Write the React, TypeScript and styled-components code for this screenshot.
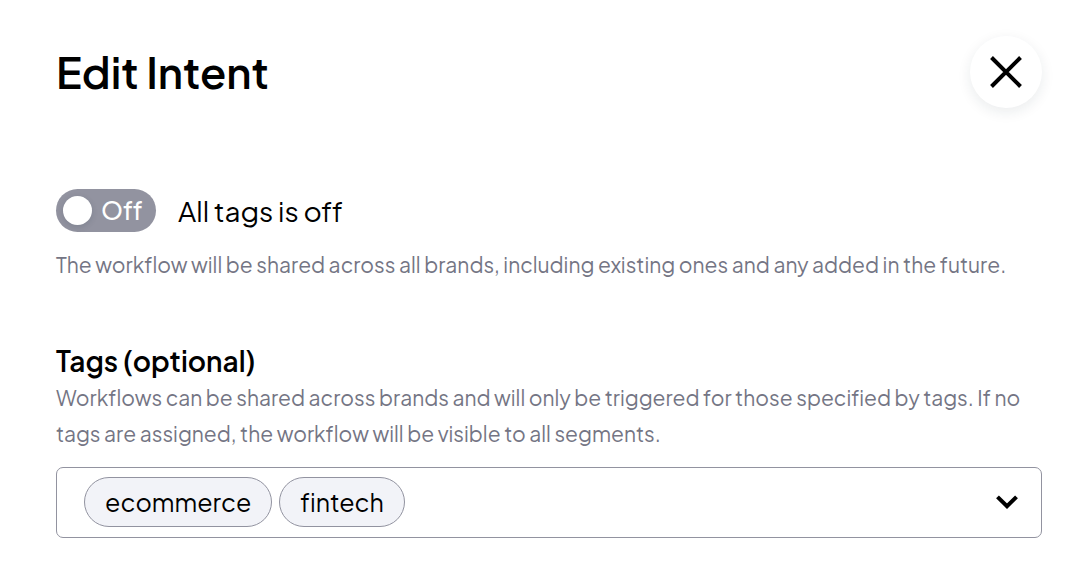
import React, { useState } from "react";
import styled, { createGlobalStyle } from "styled-components";

const GlobalStyle = createGlobalStyle`
  * { box-sizing: border-box; }
  body {
    margin: 0;
    background: #fff;
    color: #000;
    font-family: "Plus Jakarta Sans", Inter, "Liberation Sans", sans-serif;
    font-variant-ligatures: none;
  }
  button, input { font: inherit; color: inherit; font-variant-ligatures: none; }
`;

const Panel = styled.main`
  padding: 36px 50px 46px 56px;
`;

const Header = styled.header`
  display: flex;
  align-items: center;
  justify-content: space-between;
  margin-bottom: 81px;
`;

const Title = styled.h1`
  margin: 0;
  font-size: 43px;
  line-height: 56px;
  font-weight: 600;
`;

const CloseButton = styled.button`
  display: grid;
  place-items: center;
  width: 72px;
  height: 72px;
  padding: 0;
  border: 0;
  border-radius: 50%;
  background: #fff;
  box-shadow: 0 4px 14px rgba(20, 40, 60, 0.09);
  cursor: pointer;
`;

const SwitchRow = styled.label`
  display: flex;
  align-items: center;
  gap: 22px;
  width: fit-content;
  font-size: 28px;
  line-height: 43px;
  cursor: pointer;
`;

const Track = styled.span<{ $on: boolean }>`
  position: relative;
  display: flex;
  flex-direction: ${(p) => (p.$on ? "row-reverse" : "row")};
  align-items: center;
  gap: 9px;
  width: 100px;
  height: 43px;
  padding: 0 7px;
  border-radius: 22px;
  background: ${(p) => (p.$on ? "#2f6fed" : "#9293a0")};
  color: #fff;
  font-size: 25px;
  font-weight: 500;
`;

const SwitchInput = styled.input`
  position: absolute;
  inset: 0;
  width: 100%;
  height: 100%;
  margin: 0;
  opacity: 0;
  cursor: pointer;
`;

const Knob = styled.span`
  width: 29px;
  height: 29px;
  flex: none;
  border-radius: 50%;
  background: #fff;
  box-shadow: 0 2px 6px rgba(20, 40, 60, 0.14);
`;

const Hint = styled.p`
  margin: 0;
  color: #747584;
  font-size: 21px;
  line-height: 36px;
`;

const SwitchField = styled.section`
  display: grid;
  gap: 15px;
  margin-bottom: 58px;
`;

const TagsField = styled.section`
  display: flex;
  flex-direction: column;
`;

const FieldLabel = styled.label`
  font-size: 28px;
  line-height: 39px;
  font-weight: 600;
`;

const TagSelect = styled.button`
  display: flex;
  align-items: center;
  justify-content: space-between;
  width: 100%;
  min-height: 71px;
  margin-top: 15px;
  padding: 9px 23px 10px 27px;
  border: 1px solid #9293a0;
  border-radius: 7px;
  background: #fff;
  cursor: pointer;
`;

const TagList = styled.span`
  display: flex;
  flex-wrap: wrap;
  gap: 7px;
`;

const Tag = styled.span`
  padding: 0 20px;
  border: 1px solid #9293a0;
  border-radius: 25px;
  background: #f2f3f8;
  font-size: 25px;
  line-height: 48px;
`;

const tags = ["ecommerce", "fintech"];

export default function App() {
  const [allTags, setAllTags] = useState(false);

  return (
    <>
      <GlobalStyle />
      <Panel>
        <Header>
          <Title>Edit Intent</Title>
          <CloseButton type="button" aria-label="Close">
            <svg width="34" height="34" viewBox="0 0 34 34" fill="none" stroke="#000" strokeWidth="4">
              <path d="M2.5 2.5 31.5 31.5M31.5 2.5 2.5 31.5" />
            </svg>
          </CloseButton>
        </Header>

        <SwitchField>
          <SwitchRow>
            <Track $on={allTags}>
              <SwitchInput
                type="checkbox"
                role="switch"
                checked={allTags}
                aria-describedby="all-tags-hint"
                onChange={(e) => setAllTags(e.target.checked)}
              />
              <Knob />
              <span>{allTags ? "On" : "Off"}</span>
            </Track>
            <span>All tags is {allTags ? "on" : "off"}</span>
          </SwitchRow>
          <Hint id="all-tags-hint">
            The workflow will be shared across all brands, including existing ones and any added in the future.
          </Hint>
        </SwitchField>

        <TagsField>
          <FieldLabel htmlFor="tags">Tags (optional)</FieldLabel>
          <Hint id="tags-hint">
            Workflows can be shared across brands and will only be triggered for those specified by tags. If no
            tags are assigned, the workflow will be visible to all segments.
          </Hint>
          <TagSelect id="tags" type="button" aria-haspopup="listbox" aria-describedby="tags-hint">
            <TagList>
              {tags.map((tag) => (
                <Tag key={tag}>{tag}</Tag>
              ))}
            </TagList>
            <svg width="22" height="14" viewBox="0 0 22 14" fill="none" stroke="#000" strokeWidth="4">
              <path d="M1.5 1.8 11 11.2 20.5 1.8" />
            </svg>
          </TagSelect>
        </TagsField>
      </Panel>
    </>
  );
}
